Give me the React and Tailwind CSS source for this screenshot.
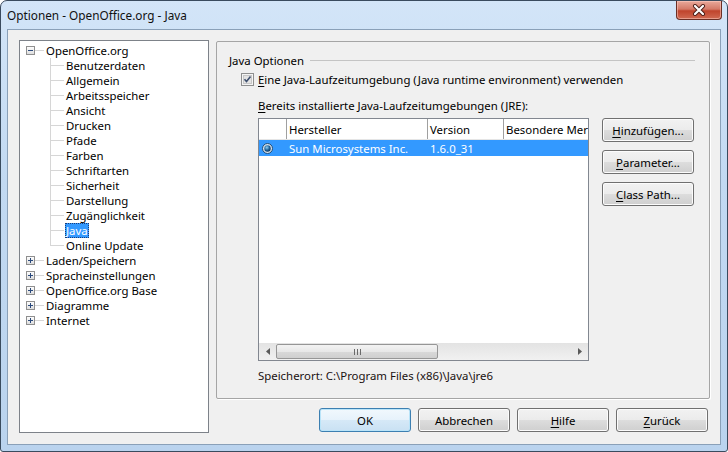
import React from "react";

const FONT = "font-['Noto_Sans',sans-serif] text-[11.4px] leading-[15px]";

function Expander({ open }) {
  return (
    <svg width="9" height="9" viewBox="0 0 9 9" className="shrink-0">
      <defs>
        <linearGradient id={open ? "exo" : "exc"} x1="0" y1="0" x2="0" y2="1">
          <stop offset="0" stopColor="#ffffff" />
          <stop offset="1" stopColor="#dcdcdc" />
        </linearGradient>
      </defs>
      <rect x="0.5" y="0.5" width="8" height="8" fill={`url(#${open ? "exo" : "exc"})`} stroke="#8f8f8f" />
      <path d="M2 4.5h5" stroke="#2b4a7c" strokeWidth="1" />
      {!open && <path d="M4.5 2v5" stroke="#2b4a7c" strokeWidth="1" />}
    </svg>
  );
}

function TopNode({ label, open }) {
  return (
    <div className="flex h-[15px] items-center pl-[6px]">
      <Expander open={open} />
      <span className="h-px w-[9px] bg-[#d6d6d6]" />
      <span className="ml-[2px] whitespace-nowrap">{label}</span>
    </div>
  );
}

function ChildNode({ label, last, selected }) {
  return (
    <div className="flex h-[15px] items-stretch">
      <span className="w-[30px] shrink-0" />
      <span className="flex w-[14px] shrink-0 flex-col">
        <span className="h-[7px] border-l border-[#d6d6d6]" />
        <span className="h-px bg-[#d6d6d6]" />
        <span className={last ? "flex-1" : "flex-1 border-l border-[#d6d6d6]"} />
      </span>
      {selected ? (
        <span className="ml-[1px] whitespace-nowrap border border-dotted border-[#1b3d78] bg-[#3399ff] leading-[13px] text-white">
          {label}
        </span>
      ) : (
        <span className="ml-[2px] whitespace-nowrap">{label}</span>
      )}
    </div>
  );
}

function WinButton({ children, isDefault, className = "" }) {
  return (
    <div
      className={
        "flex h-[24px] w-[92px] items-center justify-center rounded-[3px] border " +
        (isDefault
          ? "border-[#3c7fb1] bg-[linear-gradient(to_bottom,#f1f8fd_0%,#e6f2fb_50%,#d6e9f7_50%,#c9e1f3_100%)] shadow-[inset_0_0_0_1px_#b9e4f9]"
          : "border-[#707070] bg-[linear-gradient(to_bottom,#f2f2f2_0%,#ebebeb_50%,#dddddd_50%,#cfcfcf_100%)] shadow-[inset_0_0_0_1px_#fcfcfc]") +
        " " +
        className
      }
    >
      {children}
    </div>
  );
}

function Mn({ children }) {
  return <span className="underline underline-offset-[2px]">{children}</span>;
}

function CloseGlyph() {
  return (
    <svg width="14" height="12" viewBox="0 0 14 12">
      <path d="M3 2l8 8M11 2l-8 8" stroke="#4a1d16" strokeWidth="4" strokeLinecap="round" />
      <path d="M3 2l8 8M11 2l-8 8" stroke="#ffffff" strokeWidth="2.2" strokeLinecap="round" />
    </svg>
  );
}

function Radio() {
  return (
    <svg width="11" height="11" viewBox="0 0 11 11">
      <defs>
        <radialGradient id="rdot" cx="0.4" cy="0.35" r="0.7">
          <stop offset="0" stopColor="#8fd0f4" />
          <stop offset="0.6" stopColor="#1d5f97" />
          <stop offset="1" stopColor="#0d2f53" />
        </radialGradient>
      </defs>
      <circle cx="5.5" cy="5.5" r="5" fill="#d9e3ec" stroke="#1f4d78" />
      <circle cx="5.5" cy="5.5" r="3.2" fill="url(#rdot)" />
    </svg>
  );
}

function ScrollArrow({ dir }) {
  return (
    <svg width="4" height="7" viewBox="0 0 4 7">
      {dir === "left" ? <path d="M4 0v7L0 3.5z" fill="#5a5a5a" /> : <path d="M0 0v7l4-3.5z" fill="#5a5a5a" />}
    </svg>
  );
}

export default function App() {
  const children = [
    "Benutzerdaten",
    "Allgemein",
    "Arbeitsspeicher",
    "Ansicht",
    "Drucken",
    "Pfade",
    "Farben",
    "Schriftarten",
    "Sicherheit",
    "Darstellung",
    "Zugänglichkeit",
    "Java",
    "Online Update",
  ];
  const collapsed = ["Laden/Speichern", "Spracheinstellungen", "OpenOffice.org Base", "Diagramme", "Internet"];

  return (
    <div className={`h-[452px] w-[728px] overflow-hidden bg-white text-black ${FONT}`}>
      <div className="flex h-[452px] w-[728px] flex-col rounded-t-[7px] rounded-b-[3px] border border-[#3a4b5e] bg-[linear-gradient(to_bottom,#d3e5f8_0%,#c2d9f2_40%,#bad3ee_100%)]">
        {/* title bar */}
        <div className="flex h-[28px] shrink-0 items-start justify-between">
          <div className="pl-[6px] pt-[6px] text-[11.8px] leading-[16px] text-[#111]">Optionen - OpenOffice.org - Java</div>
          <div className="mr-[5px] flex h-[19px] w-[46px] items-center justify-center rounded-b-[4px] border border-t-0 border-[#6b2f25] bg-[linear-gradient(to_bottom,#e9a99b_0%,#d47a68_45%,#c0442c_55%,#d06a52_100%)] shadow-[inset_0_0_0_1px_rgba(255,210,200,0.5)]">
            <CloseGlyph />
          </div>
        </div>

        {/* client area */}
        <div className="mx-[6px] flex flex-1 border border-[#8aa0b8] bg-[#f0f0f0] pb-[11px] pl-[11px] pr-[10px] pt-[10px]">
          {/* tree */}
          <div className="h-[393px] w-[190px] shrink-0 border border-[#7d8289] bg-white pt-[2px]">
            <TopNode label="OpenOffice.org" open />
            {children.map((c, i) => (
              <ChildNode key={c} label={c} last={i === children.length - 1} selected={c === "Java"} />
            ))}
            {collapsed.map((c) => (
              <TopNode key={c} label={c} />
            ))}
          </div>

          {/* right column */}
          <div className="ml-[7px] flex flex-1 flex-col">
            <div className="mt-[1px] h-[358px] rounded-[2px] border border-[#a5a5a5] pl-[12px] pt-[11px] shadow-[1px_1px_0_#ffffff]">
              <div className="flex h-[15px] items-center">
                <span className="whitespace-nowrap">Java Optionen</span>
                <span className="ml-[6px] mr-[14px] h-px flex-1 bg-[#c4c4c4]" />
              </div>

              <div className="mt-[4px] flex h-[15px] items-center pl-[12px]">
                <svg width="13" height="13" viewBox="0 0 13 13" className="shrink-0">
                  <rect x="0.5" y="0.5" width="12" height="12" fill="#f4f4f4" stroke="#8e8f8f" />
                  <rect x="2.5" y="2.5" width="8" height="8" fill="#e3e3e3" stroke="#c7c7c7" />
                  <path d="M3.5 6.3l2 2.3 4-5" fill="none" stroke="#3d4f6e" strokeWidth="1.6" />
                </svg>
                <span className="ml-[4px] whitespace-nowrap">
                  <Mn>E</Mn>ine Java-Laufzeitumgebung (Java runtime environment) verwenden
                </span>
              </div>

              <div className="mt-[11px] whitespace-nowrap pl-[29px]">
                <Mn>B</Mn>ereits installierte Java-Laufzeitumgebungen (JRE):
              </div>

              <div className="mt-[5px] flex pl-[29px]">
                {/* JRE table */}
                <div className="flex h-[243px] w-[331px] flex-col border border-[#828790] bg-white">
                  <div className="flex h-[21px] shrink-0 items-center border-b border-[#e5e5e5]">
                    <span className="h-full w-[28px] shrink-0 border-r border-[#a0a0a0]" />
                    <span className="flex h-full w-[141px] shrink-0 items-center border-r border-[#a0a0a0] pl-[2px]">Hersteller</span>
                    <span className="flex h-full w-[76px] shrink-0 items-center border-r border-[#a0a0a0] pl-[2px]">Version</span>
                    <span className="flex h-full min-w-0 flex-1 items-center overflow-hidden whitespace-nowrap pl-[2px]">Besondere Merkmale</span>
                  </div>
                  <div className="flex h-[16px] shrink-0 items-center bg-[#3399ff] text-white">
                    <span className="flex w-[28px] shrink-0 pl-[3px]">
                      <Radio />
                    </span>
                    <span className="w-[141px] shrink-0 whitespace-nowrap pl-[2px]">Sun Microsystems Inc.</span>
                    <span className="w-[76px] shrink-0 pl-[2px]">1.6.0_31</span>
                  </div>
                  <div className="flex-1" />
                  <div className="flex h-[17px] shrink-0 items-center bg-[linear-gradient(to_bottom,#e3e3e3,#f1f1f1)]">
                    <span className="flex w-[17px] shrink-0 justify-center">
                      <ScrollArrow dir="left" />
                    </span>
                    <span className="flex h-[15px] w-[162px] items-center justify-center rounded-[2px] border border-[#969696] bg-[linear-gradient(to_bottom,#f3f3f3_0%,#e8e8e8_50%,#d9d9d9_50%,#cfcfcf_100%)]">
                      <span className="flex gap-[2px]">
                        <span className="h-[6px] w-px bg-[#6a6a6a]" />
                        <span className="h-[6px] w-px bg-[#6a6a6a]" />
                        <span className="h-[6px] w-px bg-[#6a6a6a]" />
                      </span>
                    </span>
                    <span className="flex-1" />
                    <span className="flex w-[17px] shrink-0 justify-center">
                      <ScrollArrow dir="right" />
                    </span>
                  </div>
                </div>

                {/* side buttons */}
                <div className="ml-[13px] flex flex-col gap-[8px]">
                  <WinButton>
                    <span>
                      <Mn>H</Mn>inzufügen...
                    </span>
                  </WinButton>
                  <WinButton>
                    <span>
                      <Mn>P</Mn>arameter...
                    </span>
                  </WinButton>
                  <WinButton>
                    <span>
                      <Mn>C</Mn>lass Path...
                    </span>
                  </WinButton>
                </div>
              </div>

              <div className="mt-[7px] whitespace-nowrap pl-[29px] text-[#1a1111]">
                Speicherort: C:\Program Files (x86)\Java\jre6
              </div>
            </div>

            {/* dialog buttons */}
            <div className="mt-[9px] flex justify-end gap-[7px] pr-[2px]">
              <WinButton isDefault>OK</WinButton>
              <WinButton>Abbrechen</WinButton>
              <WinButton>
                <span>
                  <Mn>H</Mn>ilfe
                </span>
              </WinButton>
              <WinButton>
                <span>
                  <Mn>Z</Mn>urück
                </span>
              </WinButton>
            </div>
          </div>
        </div>
        <div className="h-[6px] shrink-0" />
      </div>
    </div>
  );
}
